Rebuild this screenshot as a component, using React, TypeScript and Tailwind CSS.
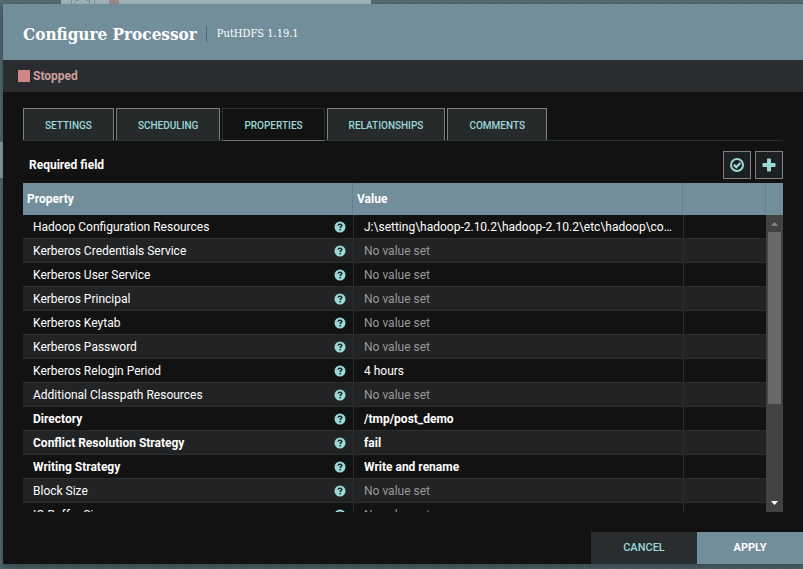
const tabs = ["SETTINGS", "SCHEDULING", "PROPERTIES", "RELATIONSHIPS", "COMMENTS"];
const activeTab = "PROPERTIES";

interface Property {
  name: string;
  value?: string;
  required?: boolean;
}

const properties: Property[] = [
  { name: "Hadoop Configuration Resources", value: "J:\\setting\\hadoop-2.10.2\\hadoop-2.10.2\\etc\\hadoop\\core-site.xml" },
  { name: "Kerberos Credentials Service" },
  { name: "Kerberos User Service" },
  { name: "Kerberos Principal" },
  { name: "Kerberos Keytab" },
  { name: "Kerberos Password" },
  { name: "Kerberos Relogin Period", value: "4 hours" },
  { name: "Additional Classpath Resources" },
  { name: "Directory", value: "/tmp/post_demo", required: true },
  { name: "Conflict Resolution Strategy", value: "fail", required: true },
  { name: "Writing Strategy", value: "Write and rename", required: true },
  { name: "Block Size" },
  { name: "IO Buffer Size" },
];

function HelpIcon() {
  return (
    <svg viewBox="0 0 12 12" className="size-3 shrink-0" aria-hidden="true">
      <circle cx="6" cy="6" r="5.5" fill="#9bd8d8" />
      <path d="M4.2 4.7C4.3 3.6 5 3.1 6 3.1c1 0 1.8.6 1.8 1.5C7.8 5.7 6.2 5.6 6.2 7" fill="none" stroke="#161a1b" strokeWidth="1.4" />
      <rect x="5.4" y="7.9" width="1.5" height="1.4" fill="#161a1b" />
    </svg>
  );
}

function Canvas() {
  return (
    <div
      aria-hidden="true"
      className="absolute inset-0 bg-[#51666e] bg-[linear-gradient(to_right,#5a7077_1px,transparent_1px),linear-gradient(to_bottom,#5a7077_1px,transparent_1px)] bg-[size:14px_14px] bg-[position:10px_1px]"
    >
      <div className="absolute top-0 left-[61px] flex h-2 w-[310px] bg-[#a1b4ba] pl-[9px]">
        <svg viewBox="0 0 26 4" className="h-1 w-[26px]" fill="none" stroke="#7f9097">
          <path d="M1.5 0v4M4.5 2v2M5 .5h4M16 .5h4M19.5 1v3M24.5 0v4" />
        </svg>
        <div className="ml-[13px] h-1 w-[10px] bg-[#9a888d]" />
      </div>
      <div className="absolute top-[142px] left-0 h-9 w-2 bg-[#8b9ea5]" />
    </div>
  );
}

export default function App() {
  return (
    <div className="relative h-screen overflow-hidden pt-1 pb-[5px] pl-[3px] font-[Roboto,sans-serif] text-[12px] text-white">
      <Canvas />
      <main className="relative flex h-full flex-col bg-[#121212] shadow-[0_3px_6px_rgba(0,0,0,0.35)]">
        <header className="flex h-14 shrink-0 items-center bg-[#728e9b] px-5 pt-1 font-['Roboto_Slab','DejaVu_Serif_Condensed','DejaVu_Serif',serif]">
          <h1 className="border-r border-[#4d646f] pr-[9px] text-[17px] leading-4 font-bold">Configure Processor</h1>
          <span className="pl-[10px] text-[11px] leading-4">PutHDFS 1.19.1</span>
        </header>
        <div className="flex h-8 shrink-0 items-center gap-[3px] bg-[#2a2d30] pl-[15px] font-bold">
          <span className="size-3 bg-[#d18686]" />
          <span className="text-[#cf9f9f]">Stopped</span>
        </div>

        <div className="flex min-h-0 flex-1 flex-col px-5 pt-4">
          <nav role="tablist" className="flex h-[33px] shrink-0 gap-[2px] border-b border-[#263334]">
            {tabs.map((tab) => (
              <button
                key={tab}
                type="button"
                role="tab"
                aria-selected={tab === activeTab}
                className={
                  "border px-[21px] pt-[2px] text-[10px] font-medium text-[#9bd8d8] " +
                  (tab === activeTab
                    ? "-mb-px border-[#263334] border-b-[#6c6f70] bg-[#121212]"
                    : "border-[#7d8182] border-b-0 bg-[#262a2b]")
                }
              >
                {tab}
              </button>
            ))}
          </nav>

          <div className="flex h-[42px] shrink-0 items-end gap-1 pb-1">
            <h2 className="mr-auto pl-[6px] leading-7 font-bold">Required field</h2>
            <button type="button" aria-label="Verify properties" className="flex size-7 items-center justify-center border border-[#7d8182] bg-[#1d2021]">
              <svg viewBox="0 0 16 16" className="size-4" fill="none" stroke="#9bd8d8" aria-hidden="true">
                <circle cx="8" cy="8" r="6" strokeWidth="2" />
                <path d="M4.8 7.6l2.5 2.5L11.4 6" strokeWidth="2.2" />
              </svg>
            </button>
            <button type="button" aria-label="Add property" className="flex size-7 items-center justify-center border border-[#7d8182] bg-[#1d2021]">
              <svg viewBox="0 0 14 14" className="size-[14px]" fill="#9bd8d8" aria-hidden="true">
                <path d="M5.8.5h2.4q.8 0 .8.8V5h3.700q.8 0 .8.8v2.400q0 .8-.8.8H9v3.700q0 .8-.8.8H5.800q-.8 0-.8-.8V9H1.300q-.8 0-.8-.8V5.800q0-.8.8-.8H5V1.300q0-.8.8-.8z" />
              </svg>
            </button>
          </div>

          <div className="relative min-h-0 flex-1 overflow-hidden">
            <table className="w-full table-fixed border-separate border-spacing-0">
              <colgroup>
                <col className="w-[330px]" />
                <col className="w-[330px]" />
                <col />
                <col className="w-[17px]" />
              </colgroup>
              <thead>
                <tr className="h-8 bg-[#728e9b] text-left">
                  <th scope="col" className="border-r border-[#66828e] pl-1 font-bold">Property</th>
                  <th scope="col" className="border-r border-[#66828e] pl-1 font-bold">Value</th>
                  <td className="border-r border-[#66828e]" />
                  <td />
                </tr>
              </thead>
              <tbody>
                {properties.map((p) => (
                  <tr key={p.name} className="h-6 odd:bg-[#121212] even:bg-[#222325]">
                    <td className="border-b border-[#2b2d2f] p-0 pt-px pr-[7px] pl-[10px]">
                      <div className={"flex items-center justify-between leading-[22px] " + (p.required ? "font-bold" : "")}>
                        {p.name}
                        <HelpIcon />
                      </div>
                    </td>
                    <td className="border-b border-l border-[#2b2d2f] p-0 pt-px pr-[10px] pl-[10px]">
                      <div className={"truncate leading-[22px] " + (p.required ? "font-bold" : p.value ? "" : "text-[#999999]")}>
                        {p.value ?? "No value set"}
                      </div>
                    </td>
                    <td className="border-b border-l border-[#2b2d2f] p-0" />
                    <td className="p-0" />
                  </tr>
                ))}
              </tbody>
            </table>
            <div aria-hidden="true" className="absolute top-8 right-0 bottom-0 flex w-[17px] flex-col items-center bg-[#424242]">
              <svg viewBox="0 0 17 17" className="size-[17px] shrink-0">
                <path d="M5 11l3.5-4 3.5 4z" fill="#868686" />
              </svg>
              <div className="h-[58%] w-[13px] bg-[#686868]" />
              <svg viewBox="0 0 17 17" className="mt-auto size-[17px] shrink-0">
                <path d="M5 6l3.5 4L12 6z" fill="#ffffff" />
              </svg>
            </div>
          </div>

          <footer className="-mr-5 flex shrink-0 justify-end pt-5 text-[11px] font-medium">
            <button type="button" className="h-8 w-[106px] bg-[#2a2d30] pt-px text-[#9bd8d8]">CANCEL</button>
            <button type="button" className="h-8 w-[106px] bg-[#728e9b] pt-px font-bold text-white">APPLY</button>
          </footer>
        </div>
      </main>
    </div>
  );
}
